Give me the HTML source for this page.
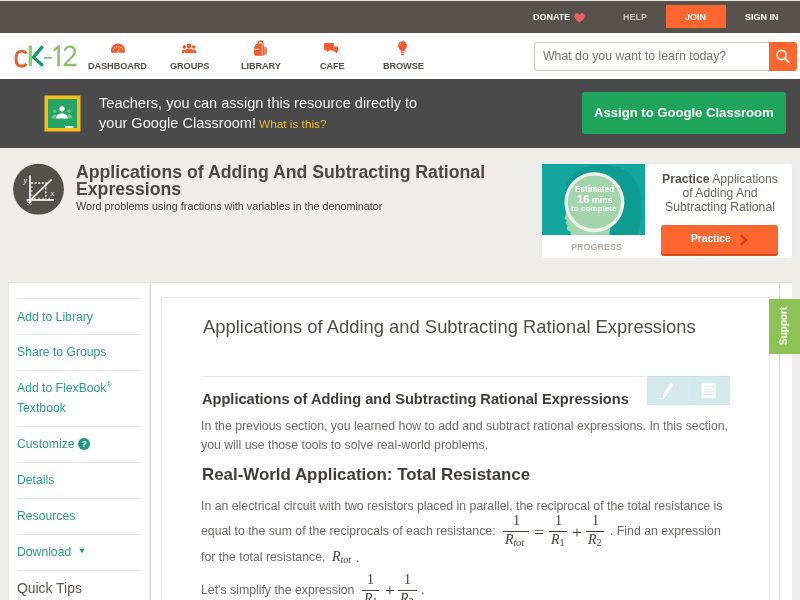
<!DOCTYPE html>
<html><head><meta charset="utf-8"><style>
html,body{margin:0;padding:0;width:800px;height:600px;overflow:hidden;background:#efedea;position:relative;font-family:"Liberation Sans",sans-serif}
.t{position:absolute;white-space:nowrap;line-height:1;font-family:"Liberation Sans",sans-serif;will-change:transform}
.r{position:absolute}
sub,sup{line-height:0}
</style></head><body>
<div class="r" style="left:0px;top:0px;width:800px;height:1px;background:#e8e6e0;"></div>
<div class="r" style="left:0px;top:1px;width:800px;height:32px;background:#57534c;"></div>
<div class="t " style="left:532.80px;top:13px;font-size:9px;font-weight:700;color:#fff;letter-spacing:0px;">DONATE</div>
<svg class="r" style="left:574px;top:12.5px" width="11" height="10" viewBox="0 0 11 10"><path d="M5.5 9.6 C2 7 0.3 5.2 0.3 3 C0.3 1.3 1.6 0.2 3 0.2 C4.1 0.2 5 0.9 5.5 1.8 C6 0.9 6.9 0.2 8 0.2 C9.4 0.2 10.7 1.3 10.7 3 C10.7 5.2 9 7 5.5 9.6Z" fill="#f25c64"/></svg>
<div class="t " style="left:623.00px;top:13px;font-size:9px;font-weight:700;color:#c9c6c0;">HELP</div>
<div class="r" style="left:665.5px;top:5px;width:60.5px;height:23px;background:#fe6630;"></div>
<div class="t " style="left:685.40px;top:13px;font-size:9px;font-weight:700;color:#fff;">JOIN</div>
<div class="t " style="left:745.40px;top:13px;font-size:9px;font-weight:700;color:#fff;">SIGN IN</div>
<div class="r" style="left:0px;top:33px;width:800px;height:46px;background:#fff;"></div>
<svg class="r" style="left:10px;top:40px" width="75" height="32" viewBox="0 0 75 32">
<path d="M16.4 13.4 C15.2 11.8 13.6 11.1 11.7 11.1 C8.1 11.1 6 13.8 6 18.8 C6 23.8 8.1 26.3 11.7 26.3 C13.7 26.3 15.3 25.5 16.5 23.9" stroke="#ee5a35" stroke-width="2.9" fill="none"/>
<rect x="18.7" y="5.6" width="3.2" height="20.6" fill="#8cc86a"/>
<path d="M32.6 6.4 L23.4 17.2 Q27.8 21.4 32.8 25.6" stroke="#0e9a6a" stroke-width="3.2" fill="none" stroke-linejoin="round"/>
<rect x="34.2" y="17" width="7.6" height="1.7" fill="#8ab86e"/>
<path d="M43.4 9.4 L47.6 5.6 L49.8 5.6 L49.8 26.2 L47.3 26.2 L47.3 8.9 L44.6 11.2Z" fill="#8dc06a"/>
<path d="M53.6 10.2 C54.6 7 57 5.4 60 5.4 C63.6 5.4 66 7.6 66 11.2 C66 14.4 64 16.6 61.4 19 L56.6 23.8 L66.5 23.8 L66.5 26.2 L53.4 26.2 L53.4 24.4 L59.8 17.8 C62.2 15.4 63.5 13.6 63.5 11.2 C63.5 8.9 62 7.7 60 7.7 C58 7.7 56.4 8.8 55.8 10.9Z" fill="#8dc06a"/>
</svg>
<svg class="r" style="left:110px;top:42px" width="16" height="12" viewBox="0 0 16 12"><path d="M1.4 10.8 A7 7 0 1 1 14.6 10.8Z" fill="#f05a2c"/><path d="M3.2 8.2 A5 5 0 0 1 12.8 8.2" stroke="#fbd9c6" stroke-width="1.1" stroke-dasharray="1.2 1" fill="none"/><path d="M6.6 10 L10.2 5.8 L8.4 10.6Z" fill="#fbd9c6"/></svg><svg class="r" style="left:181px;top:43px" width="16" height="11" viewBox="0 0 16 11"><circle cx="8" cy="2.8" r="2.4" fill="#f05a2c"/><path d="M3.6 10 C3.6 6.8 5.6 5.4 8 5.4 C10.4 5.4 12.4 6.8 12.4 10Z" fill="#f05a2c"/><circle cx="3.2" cy="4" r="1.8" fill="#f05a2c"/><path d="M0.6 10 C0.6 7.6 1.6 6.4 3.2 6.4 C4 6.4 4.5 6.8 4.7 7 C4 8 3.2 9 3.2 10Z" fill="#f05a2c"/><circle cx="12.8" cy="4" r="1.8" fill="#f05a2c"/><path d="M15.4 10 C15.4 7.6 14.4 6.4 12.8 6.4 C12 6.4 11.5 6.8 11.3 7 C12 8 12.8 9 12.8 10Z" fill="#f05a2c"/></svg>
<svg class="r" style="left:253px;top:40px" width="15" height="17" viewBox="0 0 15 17"><path d="M5 4.4 C5 2.2 6.2 1 7.6 1 C9 1 10.2 2.2 10.2 4.4" stroke="#f05a2c" stroke-width="1.3" fill="none"/><path d="M1 9.4 C1 5.6 3.2 3.6 6.4 3.6 C9.6 3.6 11.8 5.6 11.8 9.4 L11.8 13.4 C11.8 15 10.8 15.8 9.4 15.8 L3.4 15.8 C2 15.8 1 15 1 13.4Z" fill="#f05a2c"/><path d="M12 6.6 C13.6 7.2 14 8.4 14 10 L14 13.2 C14 14.4 13.2 14.8 12 14.8Z" fill="#f3845e"/><path d="M1.4 9.2 L6.2 9.2" stroke="#fde3d3" stroke-width="1"/><path d="M9.2 5.4 L9.2 15.8" stroke="#fde3d3" stroke-width="0.8"/></svg><svg class="r" style="left:324px;top:43px" width="15" height="11" viewBox="0 0 15 11"><path d="M8.4 3.4 L14.2 3.4 L14.2 8.6 L13 8.6 L13.2 10.8 L10.8 8.6 L8.4 8.6Z" fill="#f05a2c"/><path d="M0.3 0.3 L9.6 0.3 L9.6 7.2 L4.8 7.2 L3.2 9.2 L3.2 7.2 L0.3 7.2Z" fill="#f05a2c" stroke="#fff" stroke-width="0.9" paint-order="stroke"/><path d="M0.3 0.3 L9.6 0.3 L9.6 7.2 L4.8 7.2 L3.2 9.2 L3.2 7.2 L0.3 7.2Z" fill="#f05a2c"/></svg><svg class="r" style="left:397px;top:41px" width="11" height="15" viewBox="0 0 11 15"><path d="M5.5 0.3 C8.2 0.3 9.9 2.3 9.9 4.7 C9.9 6.8 8.6 7.9 7.7 9 L7.4 10.6 L3.6 10.6 L3.3 9 C2.4 7.9 1.1 6.8 1.1 4.7 C1.1 2.3 2.8 0.3 5.5 0.3Z" fill="#f05a2c"/><rect x="3.8" y="11.2" width="3.4" height="1.2" fill="#f05a2c"/><rect x="4.2" y="12.8" width="2.6" height="1.4" fill="#f05a2c"/><path d="M2.8 3.6 C3 2.6 3.6 2 4.2 1.8" stroke="#fde0cf" stroke-width="0.8" fill="none"/></svg>
<div class="t " style="left:88.00px;top:62px;font-size:9.2px;font-weight:700;color:#53504c;letter-spacing:-0.1px;">DASHBOARD</div>
<div class="t " style="left:169.60px;top:62px;font-size:9.2px;font-weight:700;color:#53504c;letter-spacing:-0.1px;">GROUPS</div>
<div class="t " style="left:241.00px;top:62px;font-size:9.2px;font-weight:700;color:#53504c;letter-spacing:-0.1px;">LIBRARY</div>
<div class="t " style="left:319.50px;top:62px;font-size:9.2px;font-weight:700;color:#53504c;letter-spacing:-0.1px;">CAFE</div>
<div class="t " style="left:383.00px;top:62px;font-size:9.2px;font-weight:700;color:#53504c;letter-spacing:-0.1px;">BROWSE</div>
<div class="r" style="left:533.5px;top:41.5px;width:236px;height:29.5px;border:1px solid #c9c8c2;border-right:none;border-radius:3px 0 0 3px;box-sizing:border-box;background:#fff"></div>
<div class="t " style="left:542.50px;top:50px;font-size:12.3px;color:#77746f;">What do you want to learn today?</div>
<div class="r" style="left:769px;top:41.5px;width:28px;height:29px;background:#fe6630;border-radius:0 3px 3px 0"></div>
<svg class="r" style="left:774px;top:48px" width="18" height="18" viewBox="0 0 18 18"><circle cx="7.6" cy="7" r="4.6" stroke="#fff" stroke-width="1.6" fill="none"/><path d="M10.8 10.4 L14.6 14" stroke="#fff" stroke-width="1.8" stroke-linecap="round"/></svg>
<div class="r" style="left:0px;top:79px;width:800px;height:69px;background:#4a4a4a;"></div>
<svg class="r" style="left:44px;top:95px" width="37" height="37" viewBox="0 0 37 37">
<rect x="0.5" y="0.5" width="36" height="36" fill="#f9bd19"/>
<rect x="4" y="4" width="29" height="29" fill="#25a464"/>
<circle cx="18" cy="13.8" r="2.6" fill="#fff"/>
<path d="M12 23.6 C12 19.8 14.6 18.4 18 18.4 C21.4 18.4 24 19.8 24 23.6Z" fill="#fff"/>
<circle cx="10.8" cy="16.2" r="1.7" fill="#6cc495"/><circle cx="25.2" cy="16.2" r="1.7" fill="#6cc495"/>
<path d="M7.6 23.6 C7.6 20.8 9 19.6 10.8 19.6 C12 19.6 12.6 20 13 20.4 C12.4 21.2 12 22.2 12 23.6Z" fill="#6cc495"/>
<path d="M28.4 23.6 C28.4 20.8 27 19.6 25.2 19.6 C24 19.6 23.4 20 23 20.4 C23.6 21.2 24 22.2 24 23.6Z" fill="#6cc495"/>
<rect x="21" y="31" width="8.4" height="1.8" fill="#fff"/>
</svg>
<div class="t " style="left:99.40px;top:96px;font-size:14.57px;color:#f2f2f2;">Teachers, you can assign this resource directly to</div>
<div class="t " style="left:99.40px;top:116px;font-size:14.57px;color:#f2f2f2;">your Google Classroom!</div>
<div class="t " style="left:259.00px;top:119px;font-size:11.8px;color:#e2bb28;">What is this?</div>
<div class="r" style="left:582px;top:92px;width:204px;height:42px;background:#1fa55b;border-radius:3px;"></div>
<div class="t " style="left:594.40px;top:106px;font-size:13.1px;font-weight:700;color:#fff;">Assign to Google Classroom</div>
<svg class="r" style="left:12px;top:163px" width="53" height="53" viewBox="0 0 53 53">
<circle cx="26.5" cy="26.2" r="25.4" fill="#54504a"/>
<g stroke="#fff" fill="none">
<path d="M18 12.5 L18 39.8" stroke-width="1.6"/>
<path d="M14.6 37 L42 37" stroke-width="1.6"/>
<path d="M19.6 35.8 L39.6 16.5" stroke-width="1.6"/>
<path d="M19 20 L35 20" stroke-width="1.4" stroke-dasharray="2 1.6"/>
<path d="M33.8 21 L33.8 36" stroke-width="1.4" stroke-dasharray="2 1.6"/>
<path d="M18 24 L20.5 24 M18 28 L20.5 28 M18 32 L20.5 32 M23 37 L23 34.6 M27 37 L27 34.6 M31 37 L31 34.6 M37 37 L37 34.6" stroke-width="1"/>
<path d="M15.4 38.6 L19.4 41.4 M15.4 41.4 L19.4 38.6" stroke-width="1.2"/>
</g>
<text x="11.6" y="19.6" font-family="Liberation Serif" font-style="italic" font-size="8.5" fill="#f4f4f2">y</text>
<text x="38.6" y="33" font-family="Liberation Serif" font-style="italic" font-size="8.5" fill="#f4f4f2">x</text>
</svg>
<div class="t " style="left:76.25px;top:164px;font-size:17.68px;font-weight:700;color:#4d4a45;">Applications of Adding And Subtracting Rational</div>
<div class="t " style="left:76.25px;top:181px;font-size:17.68px;font-weight:700;color:#4d4a45;">Expressions</div>
<div class="t " style="left:76.00px;top:201px;font-size:10.8px;color:#3f3c38;">Word problems using fractions with variables in the denominator</div>
<div class="r" style="left:542px;top:164px;width:250px;height:94px;background:#fff;border-radius:2px;box-shadow:0 0 1px #e2e0dc;"></div>
<svg class="r" style="left:542px;top:164px" width="103" height="71" viewBox="0 0 103 71">
<rect width="103" height="71" fill="#12a79e"/>
<path d="M24 40 C20 26 26 12 36 6 C50 -2 80 -2 92 14 C102 28 100 56 96 71 L70 71 Z" fill="#0e9b92"/>
<path d="M26 44 L22.4 54.6 L25 56.4 L23.6 59.4 L25.6 61.6 L24.6 64.4 C25 66.4 27 67 28.4 67.4 L29 71 L67 71 L70 55 C66 48 40 44 26 44Z" fill="#a2d5ac"/>
<circle cx="52.4" cy="38.2" r="30" fill="#eef1ea"/>
<circle cx="52.4" cy="38.2" r="26.6" fill="#a2d5ac"/>
</svg>
<div class="t " style="left:575.00px;top:186px;font-size:8.2px;font-weight:700;color:#fff;">Estimated</div>
<div class="t " style="left:577.00px;top:194px;font-size:11.3px;font-weight:700;color:#fff;">16</div>
<div class="t " style="left:592.00px;top:196px;font-size:8.8px;font-weight:700;color:#fff;">mins</div>
<div class="t " style="left:571.40px;top:205px;font-size:8.1px;font-weight:700;color:#fff;">to complete</div>
<div class="t " style="left:570.50px;top:243px;font-size:9px;font-weight:700;color:#b2aea8;">PROGRESS</div>
<div class="t " style="left:719.50px;top:173px;font-size:12.2px;color:#6a6762;transform:translateX(-50%);"><b style="color:#55524d">Practice</b> Applications</div>
<div class="t " style="left:719.50px;top:187px;font-size:12.2px;color:#6a6762;transform:translateX(-50%);">of Adding And</div>
<div class="t " style="left:719.50px;top:201px;font-size:12.2px;color:#6a6762;transform:translateX(-50%);">Subtracting Rational</div>
<div class="r" style="left:661px;top:225px;width:117px;height:31px;background:#fe6630;border-radius:3px;box-shadow:inset 0 -2px 0 #d84a1a;"></div>
<div class="t " style="left:690.60px;top:234px;font-size:10.2px;font-weight:700;color:#fff;">Practice</div>
<svg class="r" style="left:738.5px;top:233.5px" width="10" height="12" viewBox="0 0 10 12"><path d="M2 1.5 L7 6 L2 10.5" stroke="#c9451a" stroke-width="2.4" fill="none"/></svg>
<div class="r" style="left:8px;top:281.5px;width:141px;height:330px;background:#fff;border-top:1px solid #e2e0dc;border-left:1px solid #e6e5e2;box-sizing:border-box"></div>
<div class="r" style="left:16.5px;top:298px;width:123.0px;height:1px;background:#e6e5e2;"></div>
<div class="r" style="left:16.5px;top:334px;width:123.0px;height:1px;background:#e6e5e2;"></div>
<div class="r" style="left:16.5px;top:370px;width:123.0px;height:1px;background:#e6e5e2;"></div>
<div class="r" style="left:16.5px;top:426px;width:123.0px;height:1px;background:#e6e5e2;"></div>
<div class="r" style="left:16.5px;top:462px;width:123.0px;height:1px;background:#e6e5e2;"></div>
<div class="r" style="left:16.5px;top:498px;width:123.0px;height:1px;background:#e6e5e2;"></div>
<div class="r" style="left:16.5px;top:534px;width:123.0px;height:1px;background:#e6e5e2;"></div>
<div class="r" style="left:16.5px;top:570px;width:123.0px;height:1px;background:#e6e5e2;"></div>
<div class="t " style="left:16.60px;top:311px;font-size:12.2px;color:#2ba18e;">Add to Library</div>
<div class="t " style="left:16.60px;top:346px;font-size:12.2px;color:#2ba18e;">Share to Groups</div>
<div class="t " style="left:16.60px;top:382px;font-size:12.2px;color:#2ba18e;">Add to FlexBook<sup style="font-size:7px;vertical-align:5px">&reg;</sup></div>
<div class="t " style="left:16.60px;top:402px;font-size:12.2px;color:#2ba18e;">Textbook</div>
<div class="t " style="left:16.60px;top:438px;font-size:12.2px;color:#2ba18e;">Customize</div>
<svg class="r" style="left:77.5px;top:437.5px" width="12" height="12" viewBox="0 0 12 12"><circle cx="6" cy="6" r="6" fill="#1f9a86"/><text x="6" y="9.2" text-anchor="middle" font-family="Liberation Sans" font-weight="700" font-size="9" fill="#fff">?</text></svg>
<div class="t " style="left:16.60px;top:474px;font-size:12.2px;color:#2ba18e;">Details</div>
<div class="t " style="left:16.60px;top:510px;font-size:12.2px;color:#2ba18e;">Resources</div>
<div class="t " style="left:16.60px;top:546px;font-size:12.2px;color:#2ba18e;">Download</div>
<svg class="r" style="left:78.5px;top:548px" width="6" height="6" viewBox="0 0 6 6"><path d="M0.3 0.8 L5.7 0.8 L3 5.2Z" fill="#1f9a86"/></svg>
<div class="t " style="left:16.60px;top:582px;font-size:13.9px;color:#5a5753;">Quick Tips</div>
<div class="r" style="left:150px;top:281.5px;width:641.5px;height:330px;background:#fff;border-top:1px solid #dcdbd8;border-left:1px solid #dcdbd8;box-sizing:border-box"></div>
<div class="r" style="left:779.2px;top:282px;width:1.0px;height:318px;background:#e0dfdc;"></div>
<div class="r" style="left:161px;top:297px;width:608.5px;height:330px;border:1px solid #e9e8e5;box-sizing:border-box"></div>
<div class="t " style="left:203.00px;top:318px;font-size:18.4px;color:#504f4c;">Applications of Adding and Subtracting Rational Expressions</div>
<div class="r" style="left:201px;top:375.5px;width:445.5px;height:1.0px;background:#e9e8e5;"></div>
<div class="r" style="left:647px;top:375.5px;width:83px;height:29.0px;background:#d4eaea;"></div>
<div class="r" style="left:647px;top:375.5px;width:83px;height:1.0px;background:#c9e2e2;"></div>
<div class="r" style="left:689px;top:378px;width:1px;height:24px;background:#d9eded;"></div>
<svg class="r" style="left:654px;top:380px" width="22" height="20" viewBox="0 0 22 20"><path d="M16.8 3 L19.4 4.8 L12.4 15.4 L9.6 13.6Z" fill="#fff"/><path d="M9.4 14.2 L12 15.9 L10.2 17.6 L9 17.8Z" fill="#fff"/><path d="M3.4 18.4 L9.4 18.4" stroke="#eef7f7" stroke-width="0.8"/></svg>
<svg class="r" style="left:700px;top:382px" width="17" height="18" viewBox="0 0 17 18"><rect x="1.6" y="1.4" width="14" height="14.6" fill="#fff"/><path d="M4 4.6 H13.4 M4 7.2 H13.4 M4 9.8 H13.4 M4 12.4 H13.4" stroke="#cfe5e5" stroke-width="0.8"/></svg>
<div class="t " style="left:201.90px;top:392px;font-size:14.6px;font-weight:700;color:#3f3e3c;">Applications of Adding and Subtracting Rational Expressions</div>
<div class="t " style="left:201.00px;top:420px;font-size:12.3px;color:#6b6b6a;">In the previous section, you learned how to add and subtract rational expressions. In this section,</div>
<div class="t " style="left:201.00px;top:439px;font-size:12.3px;color:#6b6b6a;">you will use those tools to solve real-world problems.</div>
<div class="t " style="left:201.90px;top:467px;font-size:16.9px;font-weight:700;color:#3f3e3c;">Real-World Application: Total Resistance</div>
<div class="t " style="left:201.00px;top:500px;font-size:12.3px;color:#6b6b6a;">In an electrical circuit with two resistors placed in parallel, the reciprocal of the total resistance is</div>
<div class="t " style="left:201.00px;top:525px;font-size:12.3px;color:#6b6b6a;">equal to the sum of the reciprocals of each resistance:</div>
<div class="t " style="left:610.00px;top:525px;font-size:12.3px;color:#6b6b6a;">. Find an expression</div>
<div class="t " style="left:201.00px;top:551px;font-size:12.3px;color:#6b6b6a;">for the total resistance,</div>
<div class="t " style="left:201.00px;top:584px;font-size:12.3px;color:#6b6b6a;">Let's simplify the expression</div>
<div class="r" style="left:503.0px;top:530.9px;width:26.0px;height:1.2000000000000455px;background:#45423e;"></div>
<div class="t " style="left:512.50px;top:514px;font-size:14px;color:#45423e;font-family:'Liberation Serif';">1</div>
<div class="t " style="left:505.00px;top:533px;font-size:14px;color:#45423e;font-family:'Liberation Serif';"><i>R</i><span style="font-size:10px;position:relative;top:1.6px;"><i>tot</i></span></div>
<div class="t " style="left:533.80px;top:524px;font-size:17.5px;color:#45423e;font-family:'Liberation Serif';">=</div>
<div class="r" style="left:549.0px;top:530.9px;width:18.0px;height:1.2000000000000455px;background:#45423e;"></div>
<div class="t " style="left:554.50px;top:514px;font-size:14px;color:#45423e;font-family:'Liberation Serif';">1</div>
<div class="t " style="left:551.00px;top:533px;font-size:14px;color:#45423e;font-family:'Liberation Serif';"><i>R</i><span style="font-size:10px;position:relative;top:1.6px;">1</span></div>
<div class="t " style="left:572.00px;top:524px;font-size:17.5px;color:#45423e;font-family:'Liberation Serif';">+</div>
<div class="r" style="left:585.6px;top:530.9px;width:18.799999999999955px;height:1.2000000000000455px;background:#45423e;"></div>
<div class="t " style="left:591.50px;top:514px;font-size:14px;color:#45423e;font-family:'Liberation Serif';">1</div>
<div class="t " style="left:587.60px;top:533px;font-size:14px;color:#45423e;font-family:'Liberation Serif';"><i>R</i><span style="font-size:10px;position:relative;top:1.6px;">2</span></div>
<div class="t " style="left:332.40px;top:550px;font-size:14px;color:#45423e;font-family:'Liberation Serif';"><i>R</i><span style="font-size:10px;position:relative;top:1.6px;"><i>tot</i></span></div>
<div class="t " style="left:355.50px;top:552px;font-size:12px;color:#45423e;">.</div>
<div class="r" style="left:362.0px;top:589.5px;width:17.399999999999977px;height:1.2000000000000455px;background:#45423e;"></div>
<div class="t " style="left:367.20px;top:573px;font-size:14px;color:#45423e;font-family:'Liberation Serif';">1</div>
<div class="t " style="left:364.00px;top:592px;font-size:14px;color:#45423e;font-family:'Liberation Serif';"><i>R</i><span style="font-size:10px;position:relative;top:1.6px;">1</span></div>
<div class="t " style="left:384.60px;top:582px;font-size:17.5px;color:#45423e;font-family:'Liberation Serif';">+</div>
<div class="r" style="left:398.0px;top:589.5px;width:19.0px;height:1.2000000000000455px;background:#45423e;"></div>
<div class="t " style="left:404.00px;top:573px;font-size:14px;color:#45423e;font-family:'Liberation Serif';">1</div>
<div class="t " style="left:400.00px;top:592px;font-size:14px;color:#45423e;font-family:'Liberation Serif';"><i>R</i><span style="font-size:10px;position:relative;top:1.6px;">2</span></div>
<div class="t " style="left:421.00px;top:584px;font-size:12.3px;color:#6b6b6a;">.</div>
<div class="r" style="left:768.5px;top:298.5px;width:31.5px;height:55.5px;background:#8dc355;"></div>
<div class="t" style="left:776px;top:326px;font-size:10px;font-weight:700;color:#fff;transform:translate(-50%,-50%) rotate(-90deg);transform-origin:center;left:784px">Support</div>
</body></html>
